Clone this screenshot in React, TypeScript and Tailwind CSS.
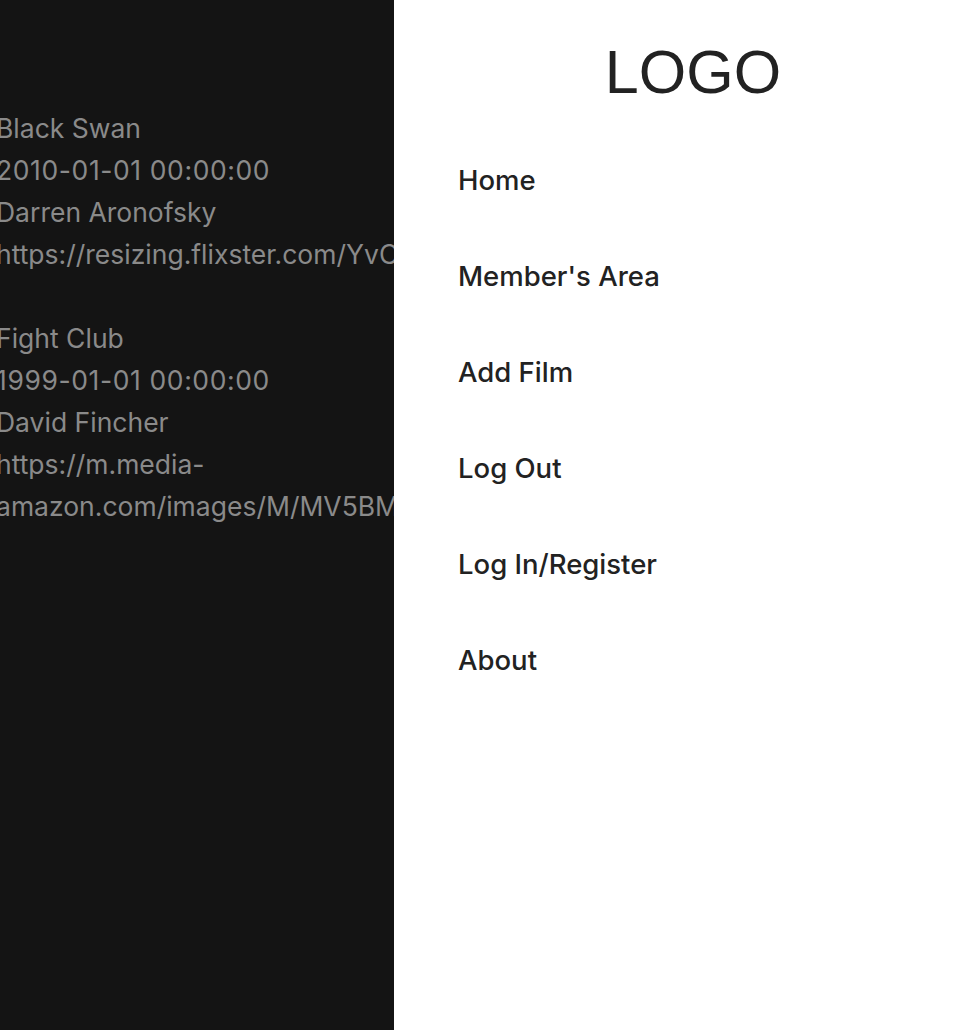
import React from "react";

const films = [
  {
    title: "Black Swan",
    date: "2010-01-01 00:00:00",
    director: "Darren Aronofsky",
    url: "https://resizing.flixster.com/YvCyDQ7MxXkbgbfbQxk1sbAy3OM=/206x305/v2/https://flxt.tmsimg.com/assets/p8102873_p_v8_ak.jpg",
  },
  {
    title: "Fight Club",
    date: "1999-01-01 00:00:00",
    director: "David Fincher",
    url: "https://m.media-amazon.com/images/M/MV5BMmEzNTkxYjQtZTc0MC00YTVjLTg5ZTEtZWMwOWVlYzY0NWIwXkEyXkFqcGdeQXVyNzkwMjQ5NzM@._V1_.jpg",
  },
];

const menu = ["Home", "Member's Area", "Add Film", "Log Out", "Log In/Register", "About"];

export default function App() {
  return (
    <div
      className="flex w-[960px] h-[1030px] overflow-hidden"
      style={{ fontFamily: "Inter, 'Noto Sans', sans-serif" }}
    >
      <div className="w-[394px] shrink-0 bg-[#141414] overflow-hidden">
        <div className="ml-[-4px] w-[390px] pt-[107px] text-[26.5px] leading-[42px] text-[#8a8a8a]">
          {films.map((f) => (
            <div key={f.title} className="mb-[42px]">
              <div className="whitespace-nowrap">{f.title}</div>
              <div className="whitespace-nowrap tracking-[0.6px]">{f.date}</div>
              <div className="whitespace-nowrap">{f.director}</div>
              <div>{f.url}</div>
            </div>
          ))}
        </div>
      </div>
      <div className="flex-1 bg-white pl-[64px] pr-[32px]">
        <div
          className="text-center text-[61px] leading-none pt-[42px] text-[#222222]"
          style={{ fontFamily: "'Liberation Sans', Arial, sans-serif" }}
        >
          LOGO
        </div>
        <nav className="mt-[60px] flex flex-col gap-[62px]">
          {menu.map((m) => (
            <a key={m} className="text-[27.5px] leading-[34px] font-medium text-[#222222] whitespace-nowrap">
              {m}
            </a>
          ))}
        </nav>
      </div>
    </div>
  );
}
